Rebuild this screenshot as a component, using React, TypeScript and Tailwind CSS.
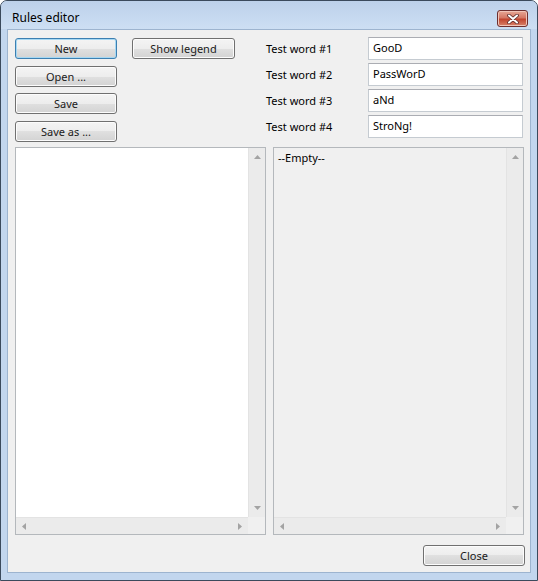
import React from "react";

const font = { fontFamily: '"Segoe UI", "Noto Sans", Arial, sans-serif' };

function WinButton({ label, focused = false, className = "" }: { label: string; focused?: boolean; className?: string }) {
  return (
    <div
      className={
        "h-[21px] rounded-[3px] border flex items-center justify-center text-[11px] font-normal text-[#1a1a1a] leading-none " +
        (focused
          ? "border-[#3c7fb1] shadow-[inset_0_0_0_1px_#a6d8f3] bg-[linear-gradient(to_bottom,#f4f4f4_0%,#ededed_50%,#e0e0e0_50%,#d3d3d3_100%)] "
          : "border-[#707070] shadow-[inset_0_0_0_1px_#fcfcfc] bg-[linear-gradient(to_bottom,#f4f4f4_0%,#ededed_50%,#e0e0e0_50%,#d3d3d3_100%)] ") +
        className
      }
    >
      {label}
    </div>
  );
}

function Arrow({ dir }: { dir: "up" | "down" | "left" | "right" }) {
  const pts = {
    up: "0,4 3.5,0 7,4",
    down: "0,0 7,0 3.5,4",
    left: "4,0 4,7 0,3.5",
    right: "0,0 0,7 4,3.5",
  }[dir];
  const w = dir === "up" || dir === "down" ? 7 : 4;
  const h = dir === "up" || dir === "down" ? 4 : 7;
  return (
    <svg width={w} height={h} viewBox={`0 0 ${w} ${h}`}>
      <polygon points={pts} fill="#a3a3a3" />
    </svg>
  );
}

function ListBox({ white, text }: { white: boolean; text?: string }) {
  return (
    <div className="w-[251px] h-[388px] border border-[#b4b8bc] flex flex-col">
      <div className="flex flex-1 min-h-0">
        <div className={"flex-1 pl-[4px] pt-[2px] text-[11px] text-black " + (white ? "bg-white" : "bg-[#f0f0f0]")}>
          {text}
        </div>
        <div className="w-[17px] bg-[#ebebeb] border-l border-[#e3e3e3] flex flex-col items-center justify-between py-[7px]">
          <Arrow dir="up" />
          <Arrow dir="down" />
        </div>
      </div>
      <div className="h-[17px] flex">
        <div className="flex-1 bg-[#ebebeb] border-t border-[#e3e3e3] flex items-center justify-between px-[6px]">
          <Arrow dir="left" />
          <Arrow dir="right" />
        </div>
        <div className="w-[17px] bg-[#f0f0f0]" />
      </div>
    </div>
  );
}

export default function App() {
  const words = ["GooD", "PassWorD", "aNd", "StroNg!"];

  return (
    <div className="w-[538px] h-[581px] bg-white" style={font}>
      <div className="w-[538px] h-[581px] rounded-t-[7px] border border-[#3b4a5c] bg-[#c2d6ee] flex flex-col">
        {/* title bar */}
        <div className="h-[28px] rounded-t-[6px] bg-[linear-gradient(to_bottom,#bdd1ea_0%,#c6d9f0_60%,#cddff3_100%)] flex items-start">
          <div className="pl-[11px] pt-[11px] text-[12px] text-black leading-none">Rules editor</div>
          <div className="ml-auto mr-[9px] mt-[9px] w-[31px] h-[17px] rounded-[3px] border border-[#6d2f2f] bg-[linear-gradient(to_bottom,#e7a896_0%,#d57865_45%,#c1452f_55%,#d8826a_100%)] shadow-[inset_0_0_0_1px_#f0c4b8] flex items-center justify-center">
            <svg width="12" height="10" viewBox="0 0 12 10">
              <path d="M2 1.5 L10 8.5 M10 1.5 L2 8.5" stroke="#5a2a2a" strokeWidth="3.6" strokeLinecap="round" />
              <path d="M2 1.5 L10 8.5 M10 1.5 L2 8.5" stroke="#ffffff" strokeWidth="2" strokeLinecap="round" />
            </svg>
          </div>
        </div>

        {/* client */}
        <div className="mx-[6px] mb-[7px] border border-[#9db4cf] bg-[#f0f0f0] flex-1 flex flex-col">
          <div className="h-[117px] flex items-start">
            <div className="ml-[7px] mt-[8px] w-[102px] flex flex-col gap-[6.5px]">
              <WinButton label="New" focused />
              <WinButton label="Open ..." />
              <WinButton label="Save" />
              <WinButton label="Save as ..." />
            </div>
            <div className="ml-[15px] mt-[8px] w-[103px]">
              <WinButton label="Show legend" />
            </div>
            <div className="ml-[31px] mt-[7px] flex flex-col gap-[3px]">
              {words.map((w, i) => (
                <div key={i} className="flex items-center h-[23px]">
                  <div className="w-[102px] text-[11px] text-black pt-[2px]">Test word #{i + 1}</div>
                  <div className="w-[155px] h-[23px] bg-white border border-[#c5cbd1] border-t-[#abadb3] pl-[4px] pt-[2px] text-[11px] text-black">
                    {w}
                  </div>
                </div>
              ))}
            </div>
          </div>

          <div className="ml-[7px] flex gap-[7px]">
            <ListBox white />
            <ListBox white={false} text="--Empty--" />
          </div>

          <div className="mt-[10px] ml-[415px] w-[102px]">
            <WinButton label="Close" />
          </div>
        </div>
      </div>
    </div>
  );
}
